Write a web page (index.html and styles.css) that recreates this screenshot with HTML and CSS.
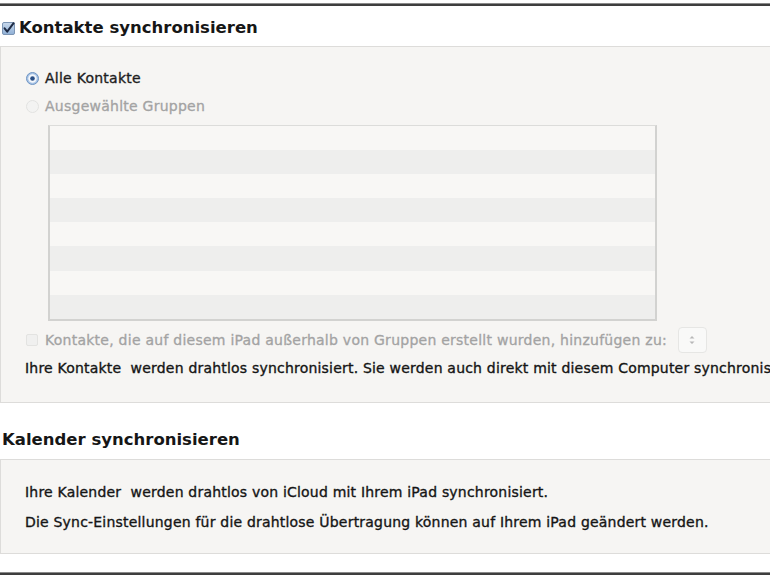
FILE: index.html
```html
<!DOCTYPE html>
<html lang="de">
<head>
<meta charset="utf-8">
<title>Sync</title>
<link rel="stylesheet" href="styles.css">
</head>
<body>
<div class="page">
  <div class="rule rule-top"></div>

  <div class="title title-check">
    <svg class="cb" width="13" height="13" viewBox="0 0 13 13">
      <defs>
        <linearGradient id="cbg" x1="0" y1="0" x2="0" y2="1">
          <stop offset="0" stop-color="#c9d9ec"/>
          <stop offset="1" stop-color="#8fb0d6"/>
        </linearGradient>
      </defs>
      <rect x="0.5" y="0.5" width="12" height="12" rx="1.5" fill="url(#cbg)" stroke="#7c95b4"/>
      <path d="M2.6 6.4 L5.2 9.6 L11.6 1.2" fill="none" stroke="#1d2a44" stroke-width="2" stroke-linecap="round" stroke-linejoin="round"/>
    </svg>
    <span>Kontakte synchronisieren</span>
  </div>

  <div class="panel panel-contacts">
    <div class="opt">
      <svg class="radio" width="13" height="13" viewBox="0 0 13 13">
        <circle cx="6.5" cy="6.5" r="6" fill="#a8c4e6" stroke="#6f94c2"/>
        <circle cx="6.5" cy="6.5" r="4.2" fill="#f4f7fb"/>
        <circle cx="6.5" cy="6.5" r="2.3" fill="#2a4f86"/>
      </svg>
      <span class="lbl">Alle Kontakte</span>
    </div>
    <div class="opt disabled">
      <svg class="radio" width="13" height="13" viewBox="0 0 13 13">
        <circle cx="6.5" cy="6.5" r="6" fill="#f3f3f2" stroke="#e2e2e0"/>
      </svg>
      <span class="lbl">Ausgewählte Gruppen</span>
    </div>

    <div class="list">
      <div class="row"></div><div class="row alt"></div>
      <div class="row"></div><div class="row alt"></div>
      <div class="row"></div><div class="row alt"></div>
      <div class="row"></div><div class="row alt"></div>
    </div>

    <div class="opt disabled addrow">
      <span class="box"></span>
      <span class="lbl">Kontakte, die auf diesem iPad außerhalb von Gruppen erstellt wurden, hinzufügen zu:</span>
      <span class="stepper">
        <svg width="6" height="10" viewBox="0 0 6 10">
          <path d="M0.5 3.5 L3 1 L5.5 3.5 Z M0.5 6.5 L3 9 L5.5 6.5 Z" fill="#b8b8b8"/>
        </svg>
      </span>
    </div>

    <p class="info">Ihre Kontakte&nbsp; werden drahtlos synchronisiert. Sie werden auch direkt mit diesem Computer synchronisiert.</p>
  </div>

  <div class="title title-plain">Kalender synchronisieren</div>

  <div class="panel panel-cal">
    <p class="info">Ihre Kalender&nbsp; werden drahtlos von iCloud mit Ihrem iPad synchronisiert.</p>
    <p class="info">Die Sync-Einstellungen für die drahtlose Übertragung können auf Ihrem iPad geändert werden.</p>
  </div>

  <div class="rule rule-bottom"></div>
</div>
</body>
</html>
```

FILE: styles.css
```css
html, body {
  margin: 0;
  padding: 0;
  background: #ffffff;
}

body {
  width: 770px;
  height: 578px;
  overflow: hidden;
  font-family: "DejaVu Sans", "Liberation Sans", Arial, sans-serif;
  color: #1b1b1b;
}

.page {
  width: 770px;
  display: flex;
  flex-direction: column;
}

.rule {
  height: 3px;
  background: #3e3e3e;
  border-top: 1px solid #8a8a8a;
  box-sizing: border-box;
}

.rule-top {
  margin-top: 3px;
}

.rule-bottom {
  margin-top: 18px;
}

.title {
  font-size: 16.5px;
  font-weight: bold;
  color: #161616;
  white-space: nowrap;
  display: flex;
  align-items: center;
}

.title-check {
  height: 40px;
  padding-left: 2px;
  padding-top: 3px;
  box-sizing: border-box;
  gap: 4px;
}

.title-check .cb {
  flex: none;
  margin-top: 1px;
}

.title-plain {
  height: 56px;
  padding-left: 2px;
  padding-top: 17px;
  box-sizing: border-box;
}

.panel {
  background: #f6f5f3;
  border: 1px solid #dddcda;
  border-right: none;
  width: 820px;
  box-sizing: border-box;
  padding-left: 24px;
}

.panel-contacts {
  height: 357px;
  padding-top: 17px;
}

.panel-cal {
  height: 95px;
  padding-top: 17px;
}

.opt {
  display: flex;
  align-items: center;
  height: 28px;
  font-size: 14px;
  letter-spacing: 0.25px;
  white-space: nowrap;
}

.opt .radio {
  flex: none;
  margin-left: 1px;
  margin-right: 6px;
}

.opt .lbl {
  color: #1e1e1e;
  -webkit-text-stroke: 0.35px #1e1e1e;
}

.opt.disabled .lbl {
  color: #a3a3a3;
  -webkit-text-stroke: 0.3px #a3a3a3;
}

.list {
  margin-top: 5px;
  margin-left: 23px;
  width: 609px;
  height: 196px;
  box-sizing: border-box;
  border: 2px solid #d2d2d0;
  border-top: 1px solid #dcdcda;
  background: #f8f7f5;
  display: flex;
  flex-direction: column;
  overflow: hidden;
}

.row {
  height: 24.1px;
  flex: none;
  background: #f8f7f5;
}

.row.alt {
  background: #eeeeed;
}

.addrow {
  margin-top: 6px;
  height: 26px;
}

.box {
  flex: none;
  width: 12px;
  height: 12px;
  box-sizing: border-box;
  border: 1px solid #e3e3e1;
  background: #f0f0ef;
  border-radius: 2px;
  margin-left: 1px;
  margin-right: 7px;
}

.stepper {
  flex: none;
  margin-left: 11px;
  width: 29px;
  height: 26px;
  box-sizing: border-box;
  border: 1px solid #e6e6e4;
  border-radius: 4px;
  background: #f9f9f8;
  display: flex;
  align-items: center;
  justify-content: center;
}

.info {
  margin: 0;
  font-size: 14px;
  letter-spacing: 0.2px;
  color: #151515;
  -webkit-text-stroke: 0.35px #151515;
  white-space: nowrap;
  height: 30px;
  line-height: 30px;
}
```
